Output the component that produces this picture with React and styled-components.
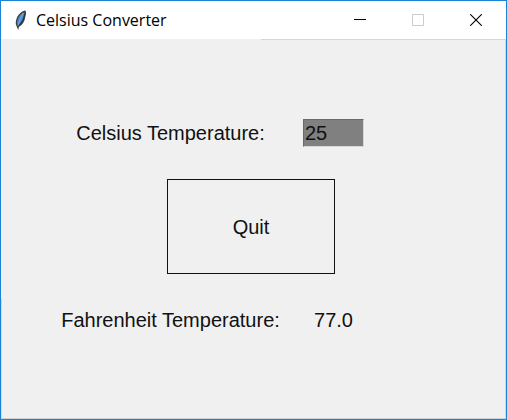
import React, { useState } from "react";
import styled, { createGlobalStyle } from "styled-components";

const GlobalStyle = createGlobalStyle`
  * { box-sizing: border-box; }
  body { margin: 0; background: #f0f0f0; }
`;

const Window = styled.div`
  display: flex;
  flex-direction: column;
  min-height: 100vh;
  border: 1px solid #1883d7;
  background: #f0f0f0;
`;

const TitleBar = styled.header`
  display: flex;
  height: 38px;
  padding-right: 1px;
  background: #fff;
`;

const Title = styled.h1`
  display: flex;
  flex: 1;
  align-items: center;
  gap: 6px;
  margin: 0;
  padding-left: 11px;
  color: #000;
  font: 400 16px/36px "Open Sans", "Noto Sans", sans-serif;
  white-space: nowrap;
`;

const WindowButton = styled.button`
  display: flex;
  align-items: center;
  justify-content: center;
  width: 58px;
  height: 38px;
  padding: 0;
  border: 0;
  background: transparent;
  color: ${(p) => (p.disabled ? "#ccc" : "#000")};
`;

const Client = styled.main`
  flex: 1;
  padding: 80px 65px 80px 60px;
  background:
    linear-gradient(#d6d6d6, #d6d6d6) right top / 245px 1px no-repeat,
    linear-gradient(#d6d6d6, #d6d6d6) right top / 1px 100% no-repeat,
    linear-gradient(#d6d6d6, #d6d6d6) left bottom / 1px 120px no-repeat,
    linear-gradient(#d0d0d0, #d0d0d0) left bottom / 100% 1px no-repeat,
    #f0f0f0;
  color: #111;
  font: 20px/28px "Liberation Sans", Arial, sans-serif;
`;

const Form = styled.form`
  display: grid;
  grid-template-columns: 219fr 107fr 54fr;
  row-gap: 32px;
  align-items: center;
  justify-items: center;
`;

const Label = styled.label`
  grid-column: 1;
  white-space: nowrap;
`;

const Entry = styled.input`
  width: 61px;
  height: 28px;
  padding: 0 1px;
  border: 1px solid;
  border-color: #696969 #d8d8d8 #d8d8d8 #696969;
  border-radius: 0;
  outline: 0;
  background: #808080;
  color: #111;
  font: inherit;
`;

const QuitButton = styled.button`
  grid-column: 1 / -1;
  width: 168px;
  height: 95px;
  padding: 0;
  border: 1px solid #111;
  border-radius: 0;
  background: transparent;
  color: inherit;
  font: inherit;
`;

const Result = styled.output`
  grid-column: 2;
`;

function Feather() {
  return (
    <svg width="18" height="24" viewBox="0 0 18 24" aria-hidden="true">
      <path d="M13.3 2.5C10 3 6.5 6 4.8 10C3.6 13 3.3 16 4.6 18.3L6.2 22L7 18.8C10.5 17 12.5 13.5 13.2 9.5C13.8 7 14.8 4 13.3 2.5Z" fill="#3d4249" />
      <path d="M12 4.3C9 5.5 7 8 5.8 11.5C5 14 5 16 5.8 17.2C7.5 16.5 10 13.5 11.2 10.5C12.2 8 12.6 6 12 4.3Z" fill="#4a8ad4" />
      <path d="M11.2 5.5C8.5 9.5 6.8 13.5 6.2 18" fill="none" stroke="#8eb5df" strokeWidth="0.8" />
      <path d="M12.6 6C12 11 10 14.5 6.6 17.6" fill="none" stroke="#22303f" />
    </svg>
  );
}

export default function App() {
  const [celsius, setCelsius] = useState("25");
  const degrees = Number(celsius);
  const fahrenheit = Number.isNaN(degrees) ? "" : (degrees * 1.8 + 32).toFixed(1);

  return (
    <>
      <GlobalStyle />
      <Window>
        <TitleBar>
          <Title>
            <Feather />
            Celsius Converter
          </Title>
          <WindowButton type="button" aria-label="Minimize">
            <svg width="12" height="12" shapeRendering="crispEdges"><path d="M0 5.5H12" stroke="currentColor" /></svg>
          </WindowButton>
          <WindowButton type="button" aria-label="Maximize" disabled>
            <svg width="12" height="12"><path d="M.5.5H11.5V11.5H.5Z" fill="none" stroke="currentColor" /></svg>
          </WindowButton>
          <WindowButton type="button" aria-label="Close">
            <svg width="12" height="12"><path d="M.3.3L11.7 11.7M11.7.3L.3 11.7" stroke="currentColor" strokeWidth="1.1" /></svg>
          </WindowButton>
        </TitleBar>
        <Client>
          <Form onSubmit={(e) => e.preventDefault()}>
            <Label htmlFor="celsius">Celsius Temperature:</Label>
            <Entry id="celsius" value={celsius} onChange={(e) => setCelsius(e.target.value)} />
            <QuitButton type="button">Quit</QuitButton>
            <Label htmlFor="fahrenheit">Fahrenheit Temperature:</Label>
            <Result id="fahrenheit">{fahrenheit}</Result>
          </Form>
        </Client>
      </Window>
    </>
  );
}
